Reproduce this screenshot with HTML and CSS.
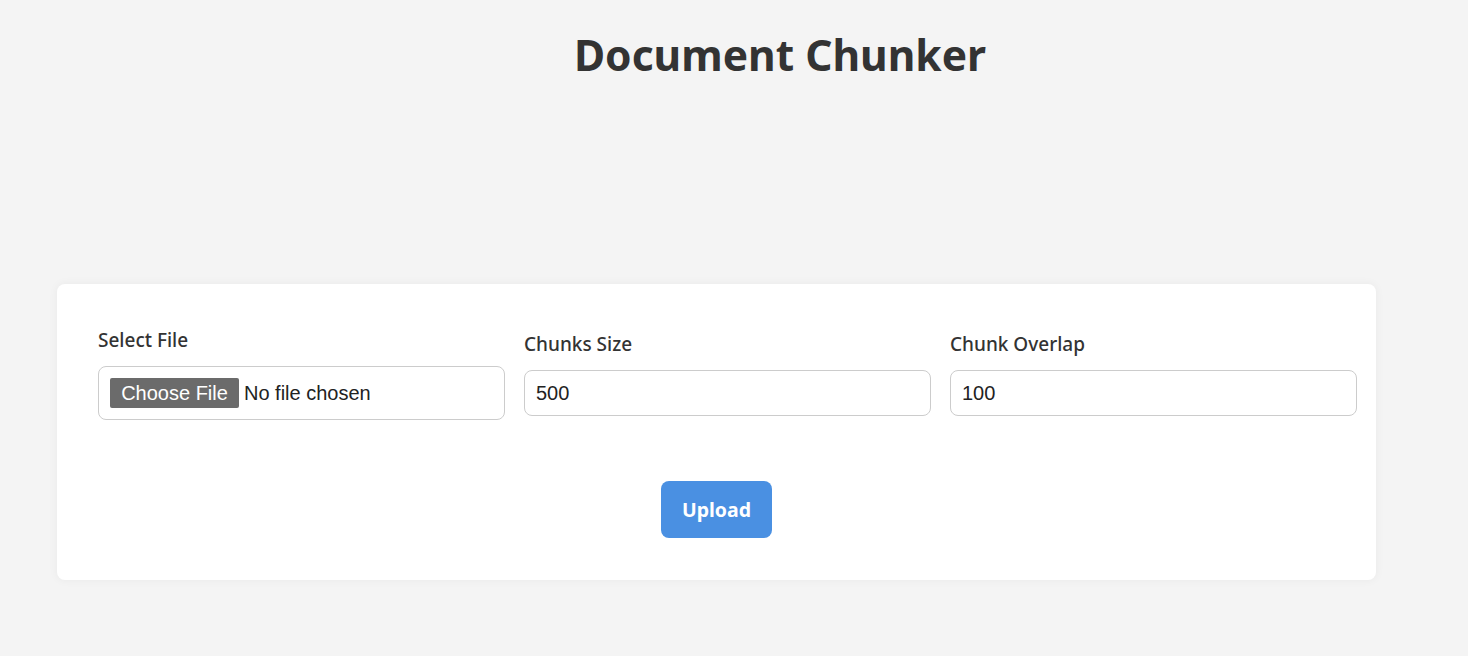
FILE: index.html
```html
<!DOCTYPE html>
<html lang="en">
<head>
<meta charset="utf-8">
<title>Document Chunker</title>
<link rel="stylesheet" href="styles.css">
</head>
<body>
<header class="header">
  <h1 class="title">Document Chunker</h1>
</header>
<main class="card">
  <form class="form">
    <div class="fields">
      <div class="field">
        <label class="label">Select File</label>
        <div class="file-box">
          <span class="file-btn">Choose File</span>
          <span class="file-name">No file chosen</span>
        </div>
      </div>
      <div class="field">
        <label class="label" for="size">Chunks Size</label>
        <input class="input" id="size" type="text" value="500">
      </div>
      <div class="field">
        <label class="label" for="overlap">Chunk Overlap</label>
        <input class="input" id="overlap" type="text" value="100">
      </div>
    </div>
    <div class="actions">
      <button class="upload" type="button">Upload</button>
    </div>
  </form>
</main>
</body>
</html>
```

FILE: styles.css
```css
* { box-sizing: border-box; }
html, body { margin: 0; padding: 0; }
body {
  background: #f4f4f4;
  font-family: "Noto Sans", "Open Sans", sans-serif;
  color: #333;
  width: 1468px;
  height: 656px;
  overflow: hidden;
}
.header {
  padding-left: 92px;
  text-align: center;
  height: 284px;
  padding-top: 23px;
}
.title {
  margin: 0;
  font-size: 42.5px;
  font-weight: 700;
  line-height: 64px;
  color: #333;
}
.card {
  margin-left: 57px;
  width: 1319px;
  background: #fff;
  border-radius: 8px;
  box-shadow: 0 0 10px rgba(0,0,0,0.05);
  padding: 44px 41px 42px 41px;
}
.fields {
  display: grid;
  grid-template-columns: repeat(3, 407px);
  column-gap: 19px;
  align-items: center;
}
.field {
  display: flex;
  flex-direction: column;
}
.label {
  font-size: 19px;
  font-weight: 500;
  line-height: 24px;
  margin-bottom: 14px;
  color: #333;
}
.file-box {
  height: 54px;
  border: 1px solid #ccc;
  border-radius: 8px;
  display: flex;
  align-items: center;
  padding-left: 11px;
  font-family: "Liberation Sans", Arial, sans-serif;
  font-size: 20px;
}
.file-btn {
  background: #6b6b6b;
  color: #fff;
  height: 30px;
  width: 129px;
  display: flex;
  align-items: center;
  justify-content: center;
  border-radius: 2px;
  margin-right: 5px;
}
.file-name { color: #222; }
.input {
  height: 46px;
  border: 1px solid #ccc;
  border-radius: 8px;
  padding: 0 11px;
  font-family: "Liberation Sans", Arial, sans-serif;
  font-size: 20px;
  color: #222;
  outline: none;
  width: 100%;
}
.actions {
  display: flex;
  justify-content: center;
  margin-top: 61px;
}
.upload {
  width: 111px;
  height: 57px;
  background: #4a90e2;
  color: #fff;
  border: none;
  border-radius: 8px;
  font-family: "Noto Sans", "Open Sans", sans-serif;
  font-weight: 700;
  font-size: 19.5px;
}
```
